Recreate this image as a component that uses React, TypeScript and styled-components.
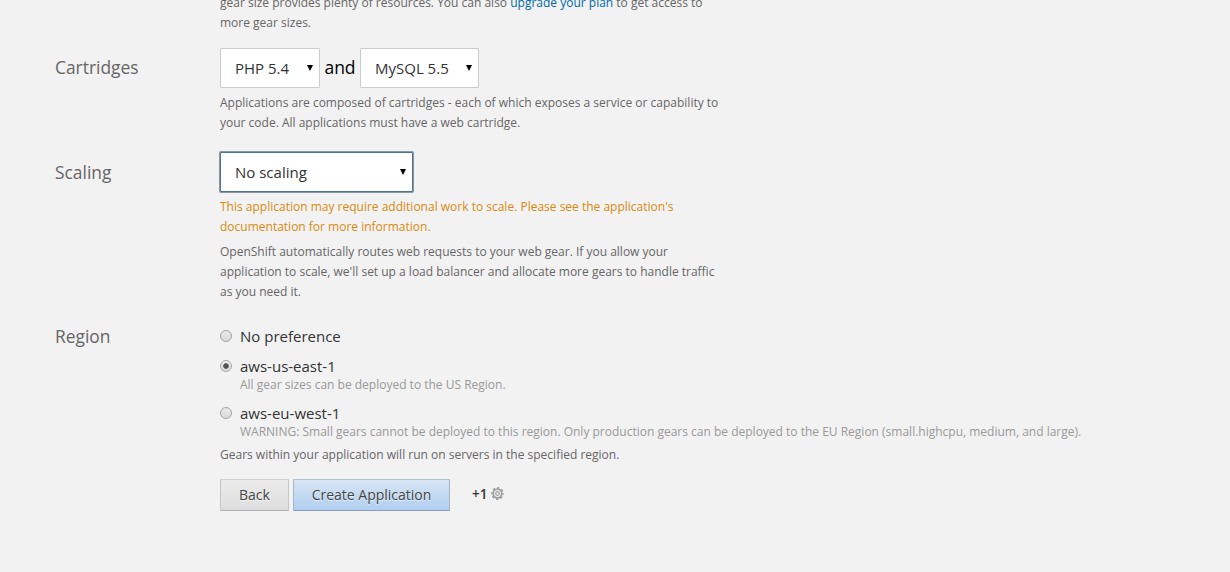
import React from "react";
import styled, { createGlobalStyle, css } from "styled-components";

const GlobalStyle = createGlobalStyle`
  html, body { margin: 0; padding: 0; background: #f2f2f2; }
  body {
    height: 572px;
    overflow: hidden;
    font-family: "Open Sans", "Liberation Sans", sans-serif;
    color: #333;
  }
`;

const Page = styled.main`
  height: 572px;
  overflow: hidden;
  box-sizing: border-box;
  padding-left: 55px;
`;

const Section = styled.section<{ $top: number }>`
  display: grid;
  grid-template-columns: 165px 900px;
  margin-top: ${(p) => p.$top}px;
`;

const SectionLabel = styled.h3<{ $drop?: number }>`
  margin: ${(p) => p.$drop ?? 0}px 0 0;
  font-size: 17.4px;
  font-weight: 400;
  line-height: 24px;
  color: #666;
`;

const Content = styled.div`
  grid-column: 2;
`;

const Help = styled.p<{ $top?: number; $tone?: "warning" }>`
  width: 500px;
  margin: ${(p) => p.$top ?? 0}px 0 0;
  font-size: 12px;
  line-height: 20px;
  white-space: nowrap;
  color: ${(p) => (p.$tone === "warning" ? "#d98a10" : "#666")};
`;

const Link = styled.a`
  color: #0069a6;
  font-weight: 500;
  text-decoration: none;
`;

const SelectRow = styled.div`
  display: flex;
  align-items: center;
`;

const SelectBox = styled.div<{ $width: number; $focused?: boolean }>`
  display: flex;
  align-items: center;
  justify-content: space-between;
  box-sizing: border-box;
  width: ${(p) => p.$width}px;
  height: 40px;
  padding: 0 5px 1px 14px;
  border: 1px solid #ccc;
  border-radius: 1px;
  background: #fff;
  color: #333;
  font-size: 15px;
  line-height: 20px;
  white-space: nowrap;
  ${(p) =>
    p.$focused &&
    css`
      border-color: #4d7496;
      box-shadow: 0 0 0 1px #8c979f;
    `}
`;

const And = styled.span`
  width: 40px;
  padding-bottom: 2px;
  text-align: center;
  font-size: 17.5px;
  line-height: 24px;
  color: #000;
`;

const Option = styled.label<{ $top?: number }>`
  display: grid;
  grid-template-columns: 20px auto;
  margin-top: ${(p) => p.$top ?? 0}px;
`;

const OptionTitle = styled.span`
  font-size: 15px;
  line-height: 20px;
  color: #333;
`;

const OptionNote = styled.span`
  grid-column: 2;
  margin: -1px 0;
  font-size: 12px;
  line-height: 20px;
  color: #999;
  white-space: nowrap;
`;

const RadioDot = styled.span<{ $checked?: boolean }>`
  box-sizing: border-box;
  width: 12px;
  height: 12px;
  margin-top: 4px;
  border: 1px solid #a5a5a5;
  border-radius: 50%;
  background: ${(p) =>
    p.$checked
      ? "radial-gradient(circle at 50% 50%, #555 0 2.4px, transparent 3.2px), linear-gradient(#eee, #dcdcdc)"
      : "linear-gradient(#eaeaea, #d9d9d9)"};
`;

const Actions = styled.div`
  display: flex;
  align-items: center;
  margin-top: 14px;
`;

const Button = styled.button<{ $width: number; $primary?: boolean }>`
  box-sizing: border-box;
  width: ${(p) => p.$width}px;
  height: 32px;
  margin: 0 4px 0 0;
  padding: 0;
  border: 1px solid;
  border-radius: 1px;
  font: 14px/20px "Open Sans", "Liberation Sans", sans-serif;
  color: #444;
  text-shadow: 0 1px 1px rgba(255, 255, 255, 0.75);
  border-color: ${(p) => (p.$primary ? "#b0bfd2 #a3b5cc #8b9db5" : "#d0d0d0 #c6c6c6 #b0b0b0")};
  background: ${(p) =>
    p.$primary ? "linear-gradient(#d8e5f4, #b0cff0)" : "linear-gradient(#ebebeb, #dedede)"};
`;

const GearCount = styled.span`
  display: flex;
  align-items: center;
  gap: 4px;
  margin: -3px 0 0 18px;
  font-size: 13.5px;
  font-weight: 600;
  line-height: 20px;
`;

const ArrowIcon = styled.svg`
  margin-top: 1px;
`;

const Arrow = () => (
  <ArrowIcon width="8" height="8" viewBox="0 0 8 8">
    <path d="M1 1h6L4 7z" fill="#000" />
  </ArrowIcon>
);

const Gear = () => (
  <svg width="13" height="13" viewBox="0 0 13 13" fill="none">
    <circle cx="6.5" cy="6.5" r="5.6" stroke="#999" strokeWidth="1.6" strokeDasharray="2.3 2.1" strokeDashoffset="1.1" />
    <circle cx="6.5" cy="6.5" r="4.3" stroke="#a0a0a0" strokeWidth="1.8" />
    <circle cx="6.5" cy="6.5" r="1.8" stroke="#a0a0a0" strokeWidth="1.2" />
  </svg>
);

interface SelectProps {
  value: string;
  width: number;
  focused?: boolean;
}

const Select = ({ value, width, focused }: SelectProps) => (
  <SelectBox $width={width} $focused={focused} role="combobox" tabIndex={0}>
    <span>{value}</span>
    <Arrow />
  </SelectBox>
);

const regions = [
  { name: "No preference", top: 2 },
  { name: "aws-us-east-1", top: 10, checked: true, note: "All gear sizes can be deployed to the US Region." },
  {
    name: "aws-eu-west-1",
    top: 9,
    note: "WARNING: Small gears cannot be deployed to this region. Only production gears can be deployed to the EU Region (small.highcpu, medium, and large).",
  },
];

export default function App() {
  return (
    <>
      <GlobalStyle />
      <Page>
        <Section $top={-7}>
          <Content>
            <Help>
              gear size provides plenty of resources. You can also <Link>upgrade your plan</Link> to get access to
              <br />
              more gear sizes.
            </Help>
          </Content>
        </Section>

        <Section $top={15}>
          <SectionLabel $drop={7}>Cartridges</SectionLabel>
          <Content>
            <SelectRow>
              <Select value="PHP 5.4" width={100} />
              <And>and</And>
              <Select value="MySQL 5.5" width={119} />
            </SelectRow>
            <Help $top={5}>
              Applications are composed of cartridges - each of which exposes a service or capability to
              <br />
              your code. All applications must have a web cartridge.
            </Help>
          </Content>
        </Section>

        <Section $top={19}>
          <SectionLabel $drop={8}>Scaling</SectionLabel>
          <Content>
            <Select value="No scaling" width={193} focused />
            <Help $top={5} $tone="warning">
              This application may require additional work to scale. Please see the application's
              <br />
              documentation for more information.
            </Help>
            <Help $top={5}>
              OpenShift automatically routes web requests to your web gear. If you allow your
              <br />
              application to scale, we'll set up a load balancer and allocate more gears to handle traffic
              <br />
              as you need it.
            </Help>
          </Content>
        </Section>

        <Section $top={22}>
          <SectionLabel>Region</SectionLabel>
          <Content>
            {regions.map((r) => (
              <Option key={r.name} $top={r.top}>
                <RadioDot $checked={r.checked} />
                <OptionTitle>{r.name}</OptionTitle>
                {r.note && <OptionNote>{r.note}</OptionNote>}
              </Option>
            ))}
            <Help $top={4}>Gears within your application will run on servers in the specified region.</Help>
            <Actions>
              <Button $width={69}>Back</Button>
              <Button $width={157} $primary>Create Application</Button>
              <GearCount>
                +1 <Gear />
              </GearCount>
            </Actions>
          </Content>
        </Section>
      </Page>
    </>
  );
}
